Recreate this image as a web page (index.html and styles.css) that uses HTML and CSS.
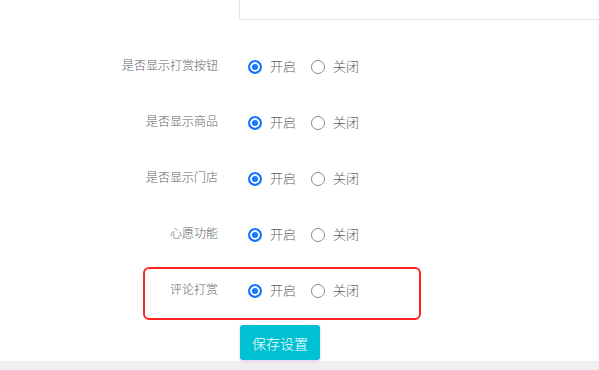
FILE: index.html
```html
<!DOCTYPE html>
<html lang="zh-CN">
<head>
    <meta charset="UTF-8">
    <meta name="viewport" content="width=device-width, initial-scale=1.0">
    <title>设置</title>
    <link rel="stylesheet" href="styles.css">
</head>
<body>
    <div class="page">
        <div class="top-box"></div>
        <form class="settings">
            <div class="row">
                <span class="label">是否显示打赏按钮</span>
                <div class="options">
                    <label class="radio"><span class="dot on"></span>开启</label>
                    <label class="radio"><span class="dot"></span>关闭</label>
                </div>
            </div>
            <div class="row">
                <span class="label">是否显示商品</span>
                <div class="options">
                    <label class="radio"><span class="dot on"></span>开启</label>
                    <label class="radio"><span class="dot"></span>关闭</label>
                </div>
            </div>
            <div class="row">
                <span class="label">是否显示门店</span>
                <div class="options">
                    <label class="radio"><span class="dot on"></span>开启</label>
                    <label class="radio"><span class="dot"></span>关闭</label>
                </div>
            </div>
            <div class="row">
                <span class="label">心愿功能</span>
                <div class="options">
                    <label class="radio"><span class="dot on"></span>开启</label>
                    <label class="radio"><span class="dot"></span>关闭</label>
                </div>
            </div>
            <div class="row marked">
                <span class="label">评论打赏</span>
                <div class="options">
                    <label class="radio"><span class="dot on"></span>开启</label>
                    <label class="radio"><span class="dot"></span>关闭</label>
                </div>
                <div class="highlight"></div>
            </div>
            <div class="actions">
                <button type="button" class="btn-save">保存设置</button>
            </div>
        </form>
        <div class="footer-bar"></div>
    </div>
</body>
</html>
```

FILE: styles.css
```css
* {
    margin: 0;
    padding: 0;
    box-sizing: border-box;
}

body {
    background-color: #ffffff;
    font-family: "Noto Sans CJK SC", "Noto Sans", sans-serif;
    color: #606266;
}

.page {
    width: 599px;
    height: 370px;
    overflow: hidden;
}

.top-box {
    margin-left: 239px;
    height: 20px;
    border-left: 1px solid #e6e6e6;
    border-bottom: 1px solid #e6e6e6;
}

.settings {
    padding-top: 19px;
}

.row {
    position: relative;
    display: flex;
    align-items: center;
    height: 56px;
}

.label {
    width: 218px;
    text-align: right;
    font-size: 12px;
    font-weight: 300;
    line-height: 16px;
    color: #62656a;
    margin-bottom: 5px;
}

.options {
    display: flex;
    align-items: center;
    gap: 15px;
    margin-left: 30px;
    margin-bottom: 2px;
}

.radio {
    display: flex;
    align-items: center;
    gap: 8px;
    font-size: 13px;
    font-weight: 300;
    line-height: 18px;
    color: #5c6066;
}

.dot {
    width: 14px;
    height: 14px;
    border-radius: 50%;
    border: 1px solid #8a8a8a;
    background-color: #ffffff;
    margin-top: 1px;
}

.dot.on {
    border: 2px solid #1677ff;
    background-color: #1677ff;
    box-shadow: inset 0 0 0 2px #ffffff;
}

.highlight {
    position: absolute;
    left: 143px;
    top: 4px;
    width: 278px;
    height: 53px;
    border: 2.5px solid #ff2424;
    border-radius: 6px;
}

.actions {
    padding-left: 240px;
    padding-top: 6px;
}

.btn-save {
    width: 80px;
    height: 35px;
    border: none;
    border-radius: 3px;
    background-color: #00c1d4;
    color: #ffffff;
    font-family: "Noto Sans CJK SC", "Noto Sans", sans-serif;
    font-size: 14px;
    font-weight: 300;
    box-shadow: 0 1px 3px rgba(170, 90, 220, 0.35);
}

.footer-bar {
    margin-top: 1px;
    height: 12px;
    background-color: #efefef;
}
```
